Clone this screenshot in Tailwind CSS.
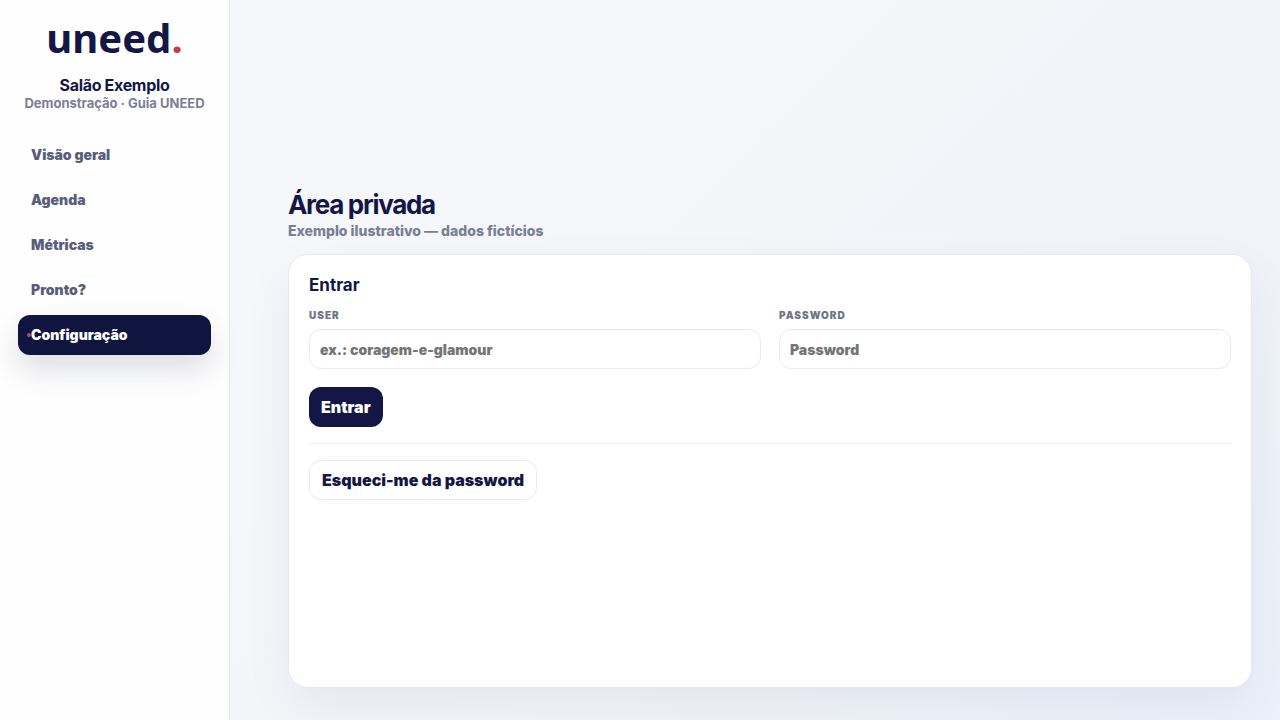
<!doctype html>
<html lang="pt">

<head>
    <meta charset="UTF-8">
    <meta name="viewport" content="width=device-width, initial-scale=1.0">
    <title>Área privada</title>
    <script src="https://cdn.jsdelivr.net/npm/@tailwindcss/browser@4"></script>
</head>

<body class="min-h-screen flex font-['Inter','Liberation_Sans',sans-serif] text-[#141745] bg-linear-135 from-[#f6f7fb] from-30% via-[#f1f4f8] via-65% to-[#ecf0fa]">
    <!-- Sidebar -->
    <aside class="w-[230px] shrink-0 border-r border-[#e5e7ef] bg-[#fefefe] px-[18px] pt-4">
        <div class="text-center">
            <p class="font-['Noto_Sans',sans-serif] text-[40px] leading-11 font-bold">uneed<span class="text-[#c93b43]">.</span></p>
            <p class="mt-[15px] text-base leading-5 font-bold tracking-[-0.02em]">Salão Exemplo</p>
            <p class="text-[13px] leading-4 font-bold text-[#7a7f93] whitespace-nowrap">Demonstração · Guia UNEED</p>
        </div>

        <nav class="mt-6 flex flex-col gap-[5px] text-sm font-black text-[#5a5d7a]">
            <a href="#" class="h-10 px-[13px] flex items-center rounded-xl">Visão geral</a>
            <a href="#" class="h-10 px-[13px] flex items-center rounded-xl">Agenda</a>
            <a href="#" class="h-10 px-[13px] flex items-center rounded-xl">Métricas</a>
            <a href="#" class="h-10 px-[13px] flex items-center rounded-xl">Pronto?</a>
            <a href="#" class="relative h-10 px-[13px] flex items-center rounded-xl bg-[#101540] text-white shadow-[0_14px_30px_rgba(16,21,64,0.14)]">
                <span class="absolute left-[9px] size-1 rounded-full bg-[#b9485c]"></span>
                Configuração
            </a>
        </nav>
    </aside>

    <!-- Login -->
    <main class="flex-1 flex flex-col pt-[189px] pr-7 pb-8 pl-[58px]">
        <h1 class="text-[26px] leading-8 font-bold tracking-tighter">Área privada</h1>
        <p class="text-sm leading-5 font-extrabold text-[#7a7f93]">Exemplo ilustrativo — dados fictícios</p>

        <section class="mt-[13px] flex-1 rounded-[20px] border border-[#e7e9f1] bg-white p-5 shadow-[0_18px_50px_rgba(16,21,64,0.06)]">
            <h2 class="text-[17px] leading-5 font-bold">Entrar</h2>
            <form>
                <div class="mt-[14px] grid grid-cols-2 gap-[18px]">
                    <div>
                        <label for="user" class="block text-[10px] leading-3 font-black tracking-widest text-[#6f7387]">USER</label>
                        <input type="text" id="user" placeholder="ex.: coragem-e-glamour"
                            class="mt-2 block w-full h-10 px-[10px] rounded-xl border border-[#ebebef] text-sm font-black placeholder:text-[#757575]">
                    </div>
                    <div>
                        <label for="password" class="block text-[10px] leading-3 font-black tracking-widest text-[#6f7387]">PASSWORD</label>
                        <input type="password" id="password" placeholder="Password"
                            class="mt-2 block w-full h-10 px-[10px] rounded-xl border border-[#ebebef] text-sm font-black placeholder:text-[#757575]">
                    </div>
                </div>
                <button type="submit" class="mt-[18px] h-10 px-3 rounded-xl bg-[#141745] text-base font-black text-white">Entrar</button>
            </form>
            <hr class="my-4 border-[#f1f1f4]">
            <button type="button" class="h-10 px-3 rounded-xl border border-[#ebebef] text-base font-black">Esqueci-me da password</button>
        </section>
    </main>
</body>

</html>
